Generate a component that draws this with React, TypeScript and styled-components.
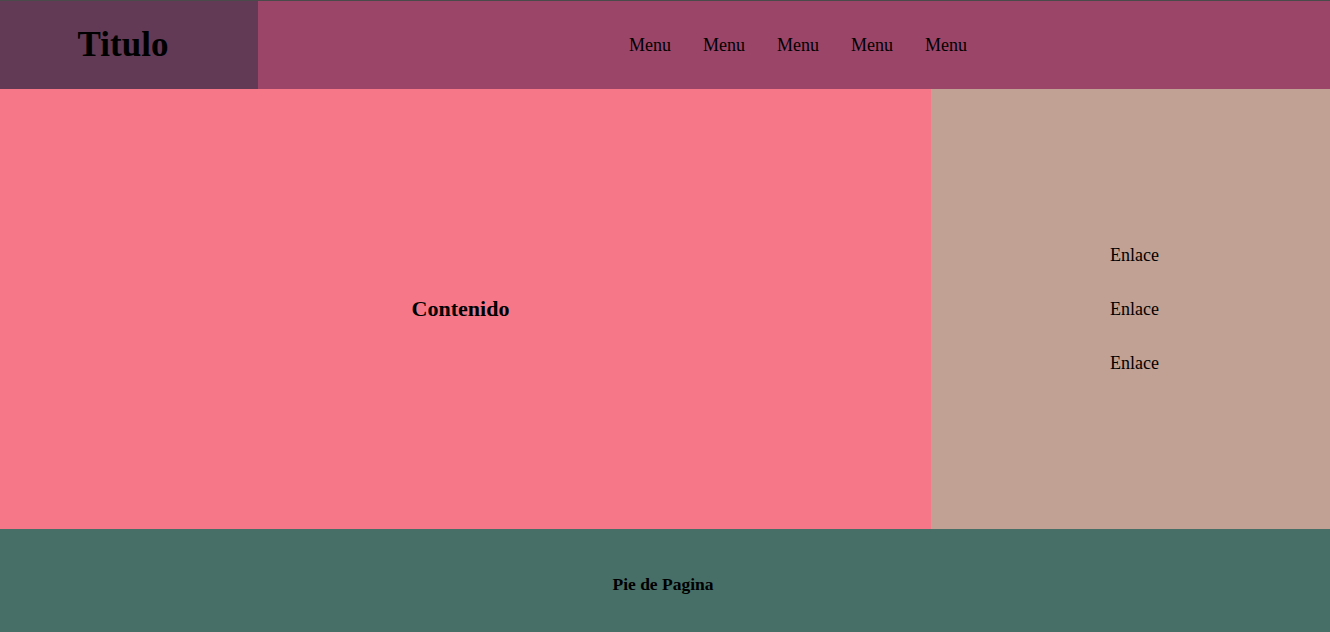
import React from "react";
import styled, { createGlobalStyle } from "styled-components";

const GlobalStyle = createGlobalStyle`
  html, body {
    margin: 0;
    padding: 0;
    background: #f67888;
  }
  body {
    font-family: "Liberation Serif", "Times New Roman", serif;
    color: #000;
    overflow: hidden;
  }
`;

const Page = styled.div`
  display: grid;
  grid-template-rows: 88px 440px 103px;
  border-top: 1px solid #4a4a4a;
  height: 631px;
`;

const Header = styled.header`
  display: flex;
  background: #9b4569;
`;

const Brand = styled.div`
  width: 258px;
  box-sizing: border-box;
  padding-right: 12px;
  background: #623a56;
  display: flex;
  align-items: center;
  justify-content: center;
`;

const Title = styled.h1`
  margin: 0;
  font-size: 35px;
  font-weight: 700;
`;

const Nav = styled.ul`
  flex: 1;
  display: flex;
  align-items: center;
  justify-content: center;
  gap: 32px;
  margin: 0;
  padding: 0 0 0 8px;
  list-style: none;
`;

const NavItem = styled.li`
  font-size: 18px;
`;

const Main = styled.main`
  display: grid;
  grid-template-columns: 931px 1fr;
`;

const Content = styled.section`
  background: #f67888;
  display: flex;
  align-items: center;
  justify-content: center;
  padding-right: 10px;
`;

const ContentTitle = styled.h2`
  margin: 0;
  font-size: 22px;
  font-weight: 700;
`;

const Sidebar = styled.aside`
  background: #c0a193;
  display: flex;
  flex-direction: column;
  align-items: center;
  justify-content: center;
  gap: 33px;
  padding-left: 8px;
`;

const SideLink = styled.a`
  font-size: 18px;
  line-height: 21px;
  color: #000;
  text-decoration: none;
`;

const Footer = styled.footer`
  background: #476f67;
  display: flex;
  align-items: center;
  justify-content: center;
  padding: 8px 4px 0 0;
`;

const FooterText = styled.h4`
  margin: 0;
  font-size: 17.5px;
  font-weight: 700;
`;

export default function App() {
  const menus = ["Menu", "Menu", "Menu", "Menu", "Menu"];
  const links = ["Enlace", "Enlace", "Enlace"];
  return (
    <>
      <GlobalStyle />
      <Page>
        <Header>
          <Brand>
            <Title>Titulo</Title>
          </Brand>
          <Nav>
            {menus.map((m, i) => (
              <NavItem key={i}>{m}</NavItem>
            ))}
          </Nav>
        </Header>
        <Main>
          <Content>
            <ContentTitle>Contenido</ContentTitle>
          </Content>
          <Sidebar>
            {links.map((l, i) => (
              <SideLink key={i} href="#">
                {l}
              </SideLink>
            ))}
          </Sidebar>
        </Main>
        <Footer>
          <FooterText>Pie de Pagina</FooterText>
        </Footer>
      </Page>
    </>
  );
}
